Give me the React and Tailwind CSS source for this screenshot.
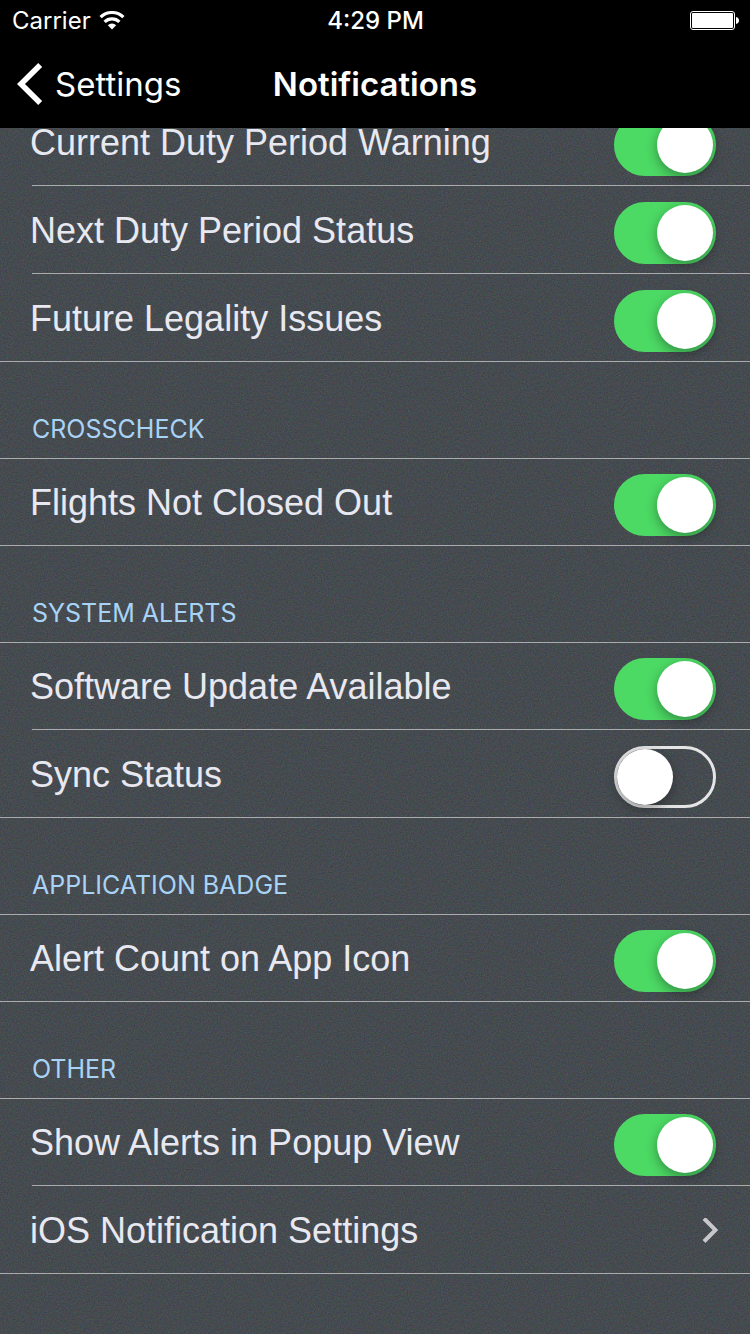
import React, { useState } from "react";

const sections = [
  {
    title: "",
    rows: [
      { id: "current-duty", label: "Current Duty Period Warning", on: true },
      { id: "next-duty", label: "Next Duty Period Status", on: true },
      { id: "future-legality", label: "Future Legality Issues", on: true },
    ],
  },
  {
    title: "CROSSCHECK",
    rows: [{ id: "flights-open", label: "Flights Not Closed Out", on: true }],
  },
  {
    title: "SYSTEM ALERTS",
    rows: [
      { id: "software-update", label: "Software Update Available", on: true },
      { id: "sync-status", label: "Sync Status", on: false },
    ],
  },
  {
    title: "APPLICATION BADGE",
    rows: [{ id: "alert-count", label: "Alert Count on App Icon", on: true }],
  },
  {
    title: "OTHER",
    rows: [
      { id: "popup-view", label: "Show Alerts in Popup View", on: true },
      { id: "ios-settings", label: "iOS Notification Settings", href: "#ios" },
    ],
  },
];

const WifiIcon = () => (
  <svg width="26" height="20" viewBox="0 0 26 20" fill="none" aria-hidden="true">
    <path d="M1.6 6.2a16.2 16.2 0 0 1 22.8 0" stroke="#fff" strokeWidth="3.2" />
    <path d="M5.6 10.800a10.6 10.6 0 0 1 14.8 0" stroke="#fff" strokeWidth="3.2" />
    <path d="M13 18.500l-4.2-4.3a6 6 0 0 1 8.400 0z" fill="#fff" />
  </svg>
);

const BatteryIcon = () => (
  <svg width="49" height="20" viewBox="0 0 49 20" fill="none" aria-hidden="true">
    <rect x="0.5" y="0.5" width="44" height="18" rx="2.5" stroke="#fff" />
    <rect x="2" y="2" width="41" height="15" rx="1" fill="#fff" />
    <path d="M46 6c2 .5 3 1.700 3 3.500S48 12.500 46 13z" fill="#fff" />
  </svg>
);

const StatusBar = () => (
  <div className="grid h-[42px] grid-cols-3 items-center pr-[11px] pl-3 text-2xl">
    <div className="flex items-center gap-2">
      <span>Carrier</span>
      <WifiIcon />
    </div>
    <span className="text-center font-medium">4:29 PM</span>
    <div className="flex justify-end">
      <BatteryIcon />
    </div>
  </div>
);

const NavBar = () => (
  <nav className="grid h-[86px] grid-cols-[1fr_auto_1fr] items-center px-4 text-[33px]">
    <a href="#settings" className="flex items-center gap-3">
      <svg width="27" height="44" viewBox="0 0 27 44" fill="none" aria-hidden="true">
        <path d="M24.200 2L5 21l19.200 19" stroke="#fff" strokeWidth="5.600" />
      </svg>
      Settings
    </a>
    <h1 className="font-semibold">Notifications</h1>
  </nav>
);

// Fine grain laid behind the whole list
const Grain = () => (
  <svg className="absolute inset-0 h-full w-full" aria-hidden="true">
    <filter id="grain" x="0" y="0" width="100%" height="100%" colorInterpolationFilters="sRGB">
      <feTurbulence type="fractalNoise" baseFrequency="0.7" numOctaves="2" seed="4" />
      <feColorMatrix values="0.18 0 0 0 0.182  0 0.16 0 0 0.213  0 0 0.18 0 0.222  0 0 0 0 1" />
    </filter>
    <rect width="100%" height="100%" filter="url(#grain)" />
  </svg>
);

const Toggle = ({ id, defaultOn }) => {
  const [on, setOn] = useState(defaultOn);

  return (
    <input
      id={id}
      type="checkbox"
      role="switch"
      checked={on}
      onChange={() => setOn(!on)}
      className="mt-[5px] h-[62px] w-[102px] shrink-0 appearance-none rounded-full border-[3px] border-[#e5e5e5] before:block before:size-14 before:rounded-full before:bg-white before:shadow-[0_4px_12px_rgba(0,0,0,0.35)] checked:border-[#4cd964] checked:bg-[#4cd964] checked:before:translate-x-10"
    />
  );
};

const Row = ({ row, last }) => (
  <li>
    {row.href ? (
      <a
        href={row.href}
        className="flex h-[87px] items-center justify-between pt-0.5 pr-8 pl-[30px]"
      >
        {row.label}
        <svg width="16" height="26" viewBox="0 0 16 26" fill="none" aria-hidden="true">
          <path d="M2 0.500L13.500 12 2 23.500" stroke="#c7c7cc" strokeWidth="4" />
        </svg>
      </a>
    ) : (
      <div className="flex h-[87px] items-center justify-between pt-0.5 pr-[34px] pl-[30px]">
        <label htmlFor={row.id}>{row.label}</label>
        <Toggle id={row.id} defaultOn={row.on} />
      </div>
    )}
    <div className={last ? "h-px bg-[#a9abad]" : "ml-8 h-px bg-[#a9abad]"} />
  </li>
);

const App = () => {
  return (
    <div className="flex min-h-screen flex-col bg-[#464b50]">
      <header className="z-10 bg-black font-[Inter,sans-serif] text-white">
        <StatusBar />
        <NavBar />
      </header>

      <main className="relative flex-1 overflow-hidden">
        <Grain />
        <div className="relative -mt-[30px] pb-[60px]">
          {sections.map((section, idx) => (
            <section key={idx}>
              {section.title && (
                <h2 className="flex h-24 items-end pb-3 pl-8 font-[Inter,sans-serif] text-[25px] leading-[34px] text-[#a9d3f5]">
                  {section.title}
                </h2>
              )}
              <ul className="font-['Liberation_Sans',Arial,sans-serif] text-4xl text-[#e8e8f0] shadow-[inset_0_1px_#a9abad]">
                {section.rows.map((row, i) => (
                  <Row
                    key={row.id}
                    row={row}
                    last={i === section.rows.length - 1}
                  />
                ))}
              </ul>
            </section>
          ))}
        </div>
      </main>
    </div>
  );
};

export default App;
